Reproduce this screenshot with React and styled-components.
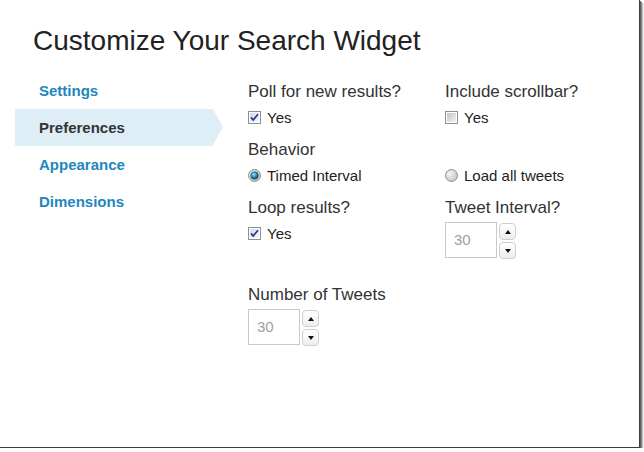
import React from 'react';
import styled, { createGlobalStyle } from 'styled-components';

const GlobalStyle = createGlobalStyle`
  body {
    margin: 0;
    background: #fff;
    font-family: "Liberation Sans", Arial, sans-serif;
  }
`;

const Frame = styled.div`
  box-sizing: border-box;
  width: 640px;
  height: 448px;
  padding-top: 25px;
  background: #fff;
  border-right: 1px solid #3c3c3c;
  border-bottom: 1px solid #3c3c3c;
  box-shadow: 1px 1px 0 #5e5e5e, 2px 2px 0 #8a8a8a, 3px 3px 1px #bdbdbd;
`;

const Title = styled.h1`
  margin: 0 0 15px 33px;
  font-size: 28px;
  line-height: 32px;
  font-weight: 400;
  color: #222;
`;

const Body = styled.div`
  display: flex;
  align-items: flex-start;
`;

const Nav = styled.ul`
  flex-shrink: 0;
  list-style: none;
  margin: 0 0 0 15px;
  padding: 0;
  width: 198px;
`;

const NavItem = styled.li`
  position: relative;
  height: 37px;
  line-height: 37px;
  padding-left: 24px;
  font-size: 15px;
  font-weight: 700;
  color: ${p => (p.$active ? '#333' : '#1f86bd')};
  background: ${p => (p.$active ? '#ddeef7' : 'transparent')};

  &::after {
    content: '';
    display: ${p => (p.$active ? 'block' : 'none')};
    position: absolute;
    top: 0;
    left: 100%;
    border-left: 10px solid #ddeef7;
    border-top: 18.5px solid transparent;
    border-bottom: 18.5px solid transparent;
  }
`;

const Form = styled.div`
  flex-shrink: 0;
  margin-left: 35px;
  padding-top: 10px;
  display: grid;
  grid-template-columns: 197px 190px;
  row-gap: 12px;
`;

const Field = styled.div`
  margin-top: ${p => p.$offset || 0}px;
`;

const Label = styled.div`
  height: 20px;
  line-height: 20px;
  font-size: 17px;
  color: #333;
  margin-bottom: 4px;
`;

const Option = styled.label`
  display: flex;
  align-items: center;
  gap: 6px;
  height: 22px;
  font-size: 15px;
  color: #222;
`;

const Spinner = styled.div`
  display: flex;
  align-items: flex-start;
  gap: 2px;
`;

const NumberBox = styled.div`
  box-sizing: border-box;
  width: 52px;
  height: 36px;
  padding-left: 8px;
  border: 1px solid #c9c9c9;
  line-height: 34px;
  font-size: 15px;
  color: #a0a0a0;
`;

const Steps = styled.div`
  display: flex;
  flex-direction: column;
  gap: 2px;
  padding-top: 1px;
`;

const StepButton = styled.div`
  box-sizing: border-box;
  width: 17px;
  height: 17px;
  border: 1px solid #cfcfcf;
  border-radius: 4px;
  background: linear-gradient(#ffffff, #eeeeee);
  display: flex;
  align-items: center;
  justify-content: center;
`;

const Check = ({ checked }) => (
  <svg width="13" height="13" viewBox="0 0 13 13">
    <defs>
      <linearGradient id={checked ? 'cbOn' : 'cbOff'} x1="0" y1="0" x2="1" y2="1">
        <stop offset="0" stopColor={checked ? '#d6d9e6' : '#c4c4c4'} />
        <stop offset="1" stopColor={checked ? '#f6f6fa' : '#f4f4f4'} />
      </linearGradient>
    </defs>
    <rect x="0.5" y="0.5" width="12" height="12" fill="#fff" stroke="#8f8f8f" />
    <rect x="2" y="2" width="9" height="9" fill={`url(#${checked ? 'cbOn' : 'cbOff'})`} />
    {checked && (
      <path d="M3 6.4 L5.2 9 L10 3.2" fill="none" stroke="#26338a" strokeWidth="1.7" />
    )}
  </svg>
);

const Radio = ({ checked }) => (
  <svg width="13" height="13" viewBox="0 0 13 13">
    <defs>
      <radialGradient id="rOff" cx="0.35" cy="0.35" r="0.8">
        <stop offset="0" stopColor="#f4f4f4" />
        <stop offset="1" stopColor="#bdbdbd" />
      </radialGradient>
      <radialGradient id="rOn" cx="0.4" cy="0.35" r="0.7">
        <stop offset="0" stopColor="#9be2f6" />
        <stop offset="0.55" stopColor="#1e8fc0" />
        <stop offset="1" stopColor="#0c3d5c" />
      </radialGradient>
    </defs>
    <circle cx="6.5" cy="6.5" r="6" fill="url(#rOff)" stroke="#8f8f8f" />
    {checked && <circle cx="6.5" cy="6.5" r="3.8" fill="url(#rOn)" stroke="#173c55" strokeWidth="0.6" />}
  </svg>
);

const Arrow = ({ up }) => (
  <svg width="6" height="4" viewBox="0 0 6 4">
    <path d={up ? 'M0 4 L3 0 L6 4 Z' : 'M0 0 L3 4 L6 0 Z'} fill="#111" />
  </svg>
);

const NumberInput = ({ value }) => (
  <Spinner>
    <NumberBox>{value}</NumberBox>
    <Steps>
      <StepButton><Arrow up /></StepButton>
      <StepButton><Arrow /></StepButton>
    </Steps>
  </Spinner>
);

const navItems = ['Settings', 'Preferences', 'Appearance', 'Dimensions'];

export default function App() {
  return (
    <>
      <GlobalStyle />
      <Frame>
        <Title>Customize Your Search Widget</Title>
        <Body>
          <Nav>
            {navItems.map(item => (
              <NavItem key={item} $active={item === 'Preferences'}>{item}</NavItem>
            ))}
          </Nav>
          <Form>
            <Field>
              <Label>Poll for new results?</Label>
              <Option><Check checked />Yes</Option>
            </Field>
            <Field>
              <Label>Include scrollbar?</Label>
              <Option><Check />Yes</Option>
            </Field>

            <Field>
              <Label>Behavior</Label>
              <Option><Radio checked />Timed Interval</Option>
            </Field>
            <Field>
              <Label />
              <Option><Radio />Load all tweets</Option>
            </Field>

            <Field>
              <Label>Loop results?</Label>
              <Option><Check checked />Yes</Option>
            </Field>
            <Field>
              <Label>Tweet Interval?</Label>
              <NumberInput value="30" />
            </Field>

            <Field $offset={14}>
              <Label>Number of Tweets</Label>
              <NumberInput value="30" />
            </Field>
          </Form>
        </Body>
      </Frame>
    </>
  );
}
